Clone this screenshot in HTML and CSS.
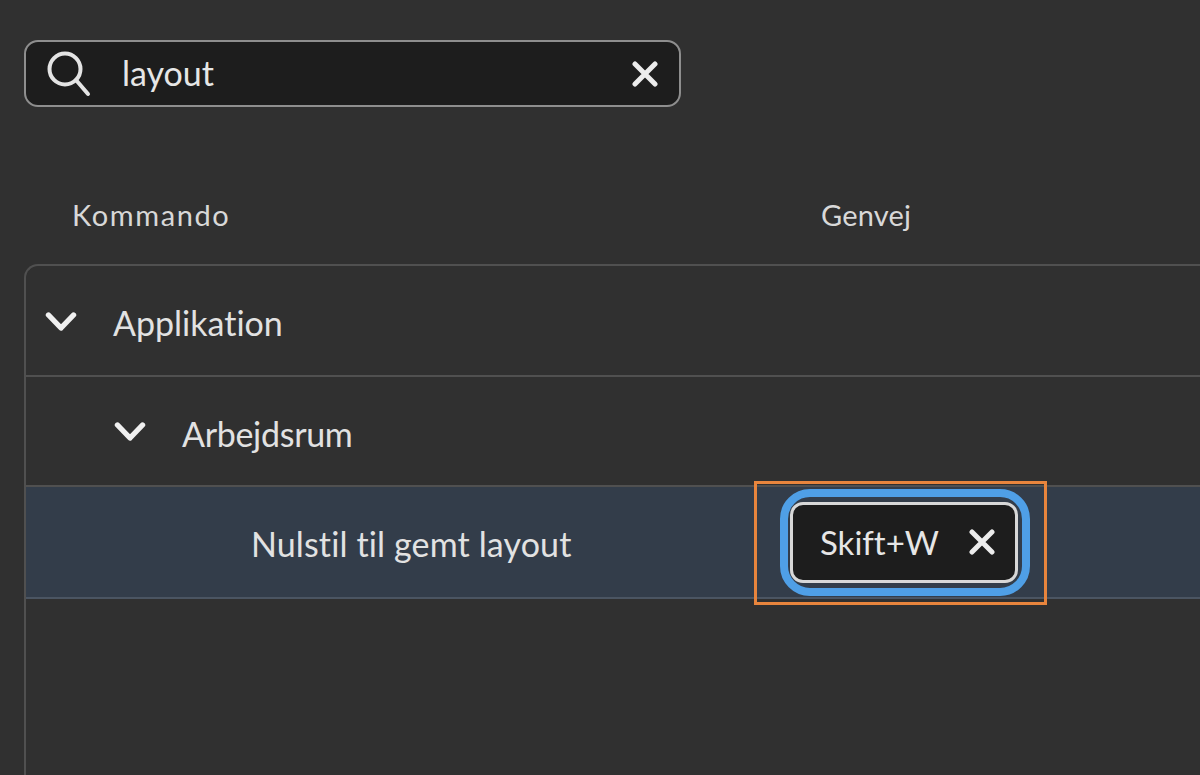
FILE: index.html
```
<!DOCTYPE html>
<html lang="da">
<head>
<meta charset="utf-8">
<title>Tastaturgenveje</title>
<link rel="stylesheet" href="styles.css">
</head>
<body>
<div class="page">
  <div class="search">
    <svg class="search-icon" width="46" height="48" viewBox="0 0 46 48"><circle cx="20" cy="19" r="15.5" fill="none" stroke="#e4e4e4" stroke-width="4"/><path d="M31 30 L43 44" fill="none" stroke="#e4e4e4" stroke-width="4" stroke-linecap="round"/></svg>
    <span class="search-text">layout</span>
    <svg class="x-icon" width="26" height="26" viewBox="0 0 26 26"><path d="M3 3 L23 23 M23 3 L3 23" stroke="#ececec" stroke-width="5" stroke-linecap="round"/></svg>
  </div>
  <div class="columns">
    <span class="col-command">Kommando</span>
    <span class="col-shortcut">Genvej</span>
  </div>
  <div class="tree">
    <div class="row row-app">
      <svg class="chevron" width="32" height="22" viewBox="0 0 32 22"><path d="M3.5 4 L16 17 L28.5 4" fill="none" stroke="#f0f0f0" stroke-width="5.4" stroke-linecap="round" stroke-linejoin="round"/></svg>
      <span class="label">Applikation</span>
    </div>
    <div class="row row-work">
      <svg class="chevron" width="32" height="22" viewBox="0 0 32 22"><path d="M3.5 4 L16 17 L28.5 4" fill="none" stroke="#f0f0f0" stroke-width="5.4" stroke-linecap="round" stroke-linejoin="round"/></svg>
      <span class="label label-work">Arbejdsrum</span>
    </div>
    <div class="row row-selected">
      <span class="label cmd">Nulstil til gemt layout</span>
      <div class="focus-ring">
        <div class="shortcut">
          <span class="shortcut-text">Skift+W</span>
          <svg class="x-small" width="26" height="26" viewBox="0 0 26 26"><path d="M3 3 L23 23 M23 3 L3 23" stroke="#ececec" stroke-width="5" stroke-linecap="round"/></svg>
        </div>
      </div>
      <div class="highlight"></div>
    </div>
  </div>
</div>
</body>
</html>
```

FILE: styles.css
```
* { box-sizing: border-box; }
html, body { margin: 0; height: 100%; }
body {
  width: 1200px;
  height: 775px;
  overflow: hidden;
  background: #303030;
  font-family: "Lato", "Noto Sans", sans-serif;
  font-variant-ligatures: none;
  color: #e6e6e6;
}
.page { padding: 40px 0 0 24px; height: 775px; overflow: hidden; }
.search {
  width: 657px;
  height: 67px;
  border: 2px solid #8e8e8e;
  border-radius: 14px;
  background: #1d1d1d;
  display: flex;
  align-items: center;
  padding: 0 21px 0 19px;
}
.search-icon { flex: none; }
.search-text { font-size: 34px; margin-left: 31px; flex: 1; position: relative; top: -1px; }
.columns {
  display: flex;
  height: 157px;
  padding: 91px 0 0 48px;
  font-size: 29px;
  line-height: 34px;
  color: #d8d8d8;
}
.col-command { width: 749px; letter-spacing: 1.6px; }
.col-shortcut { letter-spacing: 0.2px; }
.tree {
  border: 2px solid #505050;
  border-right: 0;
  border-bottom: 0;
  border-top-left-radius: 14px;
  height: 520px;
}
.row { display: flex; align-items: center; height: 110px; border-bottom: 2px solid #505050; }
.row-app { height: 111px; padding: 8px 0 0 19px; }
.row-work { padding: 8px 0 0 88px; }
.label { font-size: 34px; color: #e2e2e2; position: relative; top: -2px; }
.row-app .label { margin-left: 36px; }
.row-work .label { margin-left: 36px; }
.label-work { letter-spacing: -0.3px; }
.chevron { flex: none; position: relative; top: -3px; }
.row-selected {
  position: relative;
  background: #333d4a;
  height: 112px;
  border-bottom: 2px solid #4b5562;
  padding-left: 225px;
}
.cmd { width: 529px; flex: none; margin-top: 6px; letter-spacing: 0.13px; }
.focus-ring {
  width: 250px;
  height: 107px;
  border: 8px solid #4f9fe6;
  border-radius: 30px;
  padding: 5px 4px 5px 2px;
  flex: none;
  background: #333d4a;
}
.shortcut {
  height: 100%;
  border: 3px solid #d8d8d8;
  border-radius: 13px;
  background: #1d1d1d;
  display: flex;
  align-items: center;
  padding: 0 20px 0 27px;
  justify-content: space-between;
}
.shortcut-text { font-size: 33px; color: #e6e6e6; }
.highlight {
  position: absolute;
  left: 728px;
  top: -6px;
  width: 293px;
  height: 124px;
  border: 3px solid #e8853d;
  pointer-events: none;
}
```
